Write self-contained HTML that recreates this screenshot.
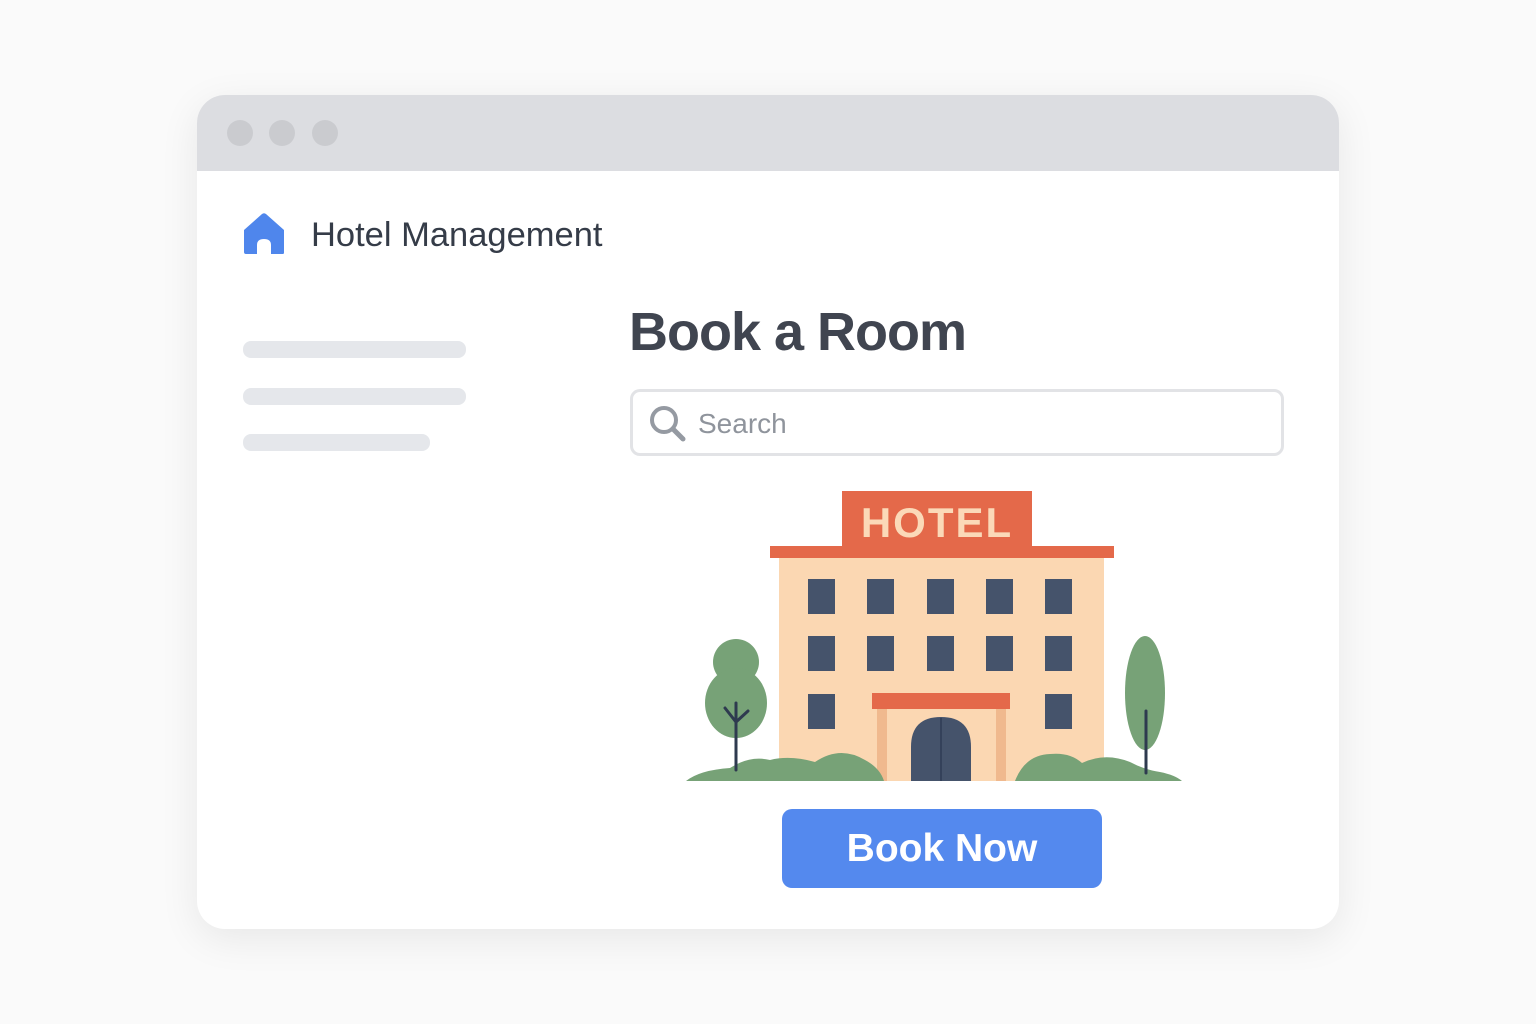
<!DOCTYPE html>
<html><head><meta charset="utf-8"><style>
body{margin:0;width:1536px;height:1024px;background:#fafafa;position:relative;overflow:hidden;font-family:"Liberation Sans",sans-serif}
.win{position:absolute;left:197px;top:95px;width:1142px;height:834px;background:#fff;border-radius:28px;box-shadow:0 10px 40px rgba(0,0,0,.08);overflow:hidden}
.bar{position:absolute;left:0;top:0;width:100%;height:76px;background:#dcdde1}
.dot{position:absolute;top:25px;width:26px;height:26px;border-radius:50%;background:#cacbcf}
.ab{position:absolute}
.line{position:absolute;left:243px;height:17px;border-radius:8px;background:#e5e7eb}
</style></head><body>
<div class="win"><div class="bar"><div class="dot" style="left:30px"></div><div class="dot" style="left:72px"></div><div class="dot" style="left:115px"></div></div></div>
<svg class="ab" style="left:242px;top:213px" width="44" height="42" viewBox="0 0 44 42"><path d="M2 17 L20 1 Q22 -0.5 24 1 L42 17 L42 40 Q42 41 40 41 L29 41 L29 32 Q29 26 22 26 Q15 26 15 32 L15 41 L4 41 Q2 41 2 39 Z" fill="#4f86ec"/></svg>
<div class="ab" style="left:311px;top:216px;font-size:34.5px;color:#353c48">Hotel Management</div>
<div class="line" style="top:341px;width:223px"></div>
<div class="line" style="top:388px;width:223px"></div>
<div class="line" style="top:434px;width:187px"></div>
<div class="ab" style="left:629px;top:301px;font-size:54px;font-weight:bold;color:#404550;letter-spacing:-1px">Book a Room</div>
<div class="ab" style="left:630px;top:389px;width:648px;height:61px;border:3px solid #e2e3e6;border-radius:10px"></div>
<svg class="ab" style="left:648px;top:404px" width="40" height="40" viewBox="0 0 40 40"><circle cx="16" cy="16" r="12" fill="none" stroke="#959aa2" stroke-width="4"/><path d="M25 25 L35 35" stroke="#959aa2" stroke-width="5" stroke-linecap="round"/></svg>
<div class="ab" style="left:698px;top:408px;font-size:28px;color:#8f949c">Search</div>
<svg class="ab" style="left:0;top:0" width="1536" height="1024">
<rect x="779" y="556" width="325" height="225" fill="#fbd7b2"/>
<rect x="770" y="546" width="344" height="12" fill="#e4694a"/>
<rect x="842" y="491" width="190" height="56" fill="#e4694a"/>
<text x="937" y="537" text-anchor="middle" font-family="Liberation Sans" font-weight="bold" font-size="42" fill="#fbd9b8" letter-spacing="2">HOTEL</text>
<g fill="#45536b">
<rect x="808" y="579" width="27" height="35"/><rect x="867" y="579" width="27" height="35"/><rect x="927" y="579" width="27" height="35"/><rect x="986" y="579" width="27" height="35"/><rect x="1045" y="579" width="27" height="35"/>
<rect x="808" y="636" width="27" height="35"/><rect x="867" y="636" width="27" height="35"/><rect x="927" y="636" width="27" height="35"/><rect x="986" y="636" width="27" height="35"/><rect x="1045" y="636" width="27" height="35"/>
<rect x="808" y="694" width="27" height="35"/><rect x="1045" y="694" width="27" height="35"/>
</g>
<rect x="877" y="709" width="10" height="72" fill="#f0b98e"/><rect x="996" y="709" width="10" height="72" fill="#f0b98e"/>
<rect x="872" y="693" width="138" height="16" fill="#e4694a"/>
<path d="M911 781 L911 747 Q911 717 941 717 Q971 717 971 747 L971 781 Z" fill="#45536b"/>
<path d="M941 718 L941 781" stroke="#34415a" stroke-width="2"/>
<g fill="#77a277">
<circle cx="736" cy="662" r="23"/><ellipse cx="736" cy="703" rx="31" ry="35"/>
<ellipse cx="1145" cy="693" rx="20" ry="57"/>
<path d="M686 781 Q700 770 730 768 Q750 755 770 760 Q790 755 815 762 Q840 745 865 760 Q880 768 884 781 Z"/>
<path d="M1015 781 Q1025 755 1050 754 Q1070 752 1082 763 Q1105 752 1130 762 Q1145 770 1160 772 Q1175 775 1182 781 Z"/>
</g>
<path d="M736 703 L736 770 M725 708 L736 722 L748 711" stroke="#2e3a4f" stroke-width="3" fill="none" stroke-linecap="round"/>
<path d="M1146 711 L1146 773" stroke="#2e3a4f" stroke-width="3" stroke-linecap="round"/>
</svg>
<div class="ab" style="left:782px;top:809px;width:320px;height:79px;background:#5489ee;border-radius:10px;color:#fff;font-size:39px;font-weight:bold;text-align:center;line-height:79px">Book Now</div>
</body></html>
